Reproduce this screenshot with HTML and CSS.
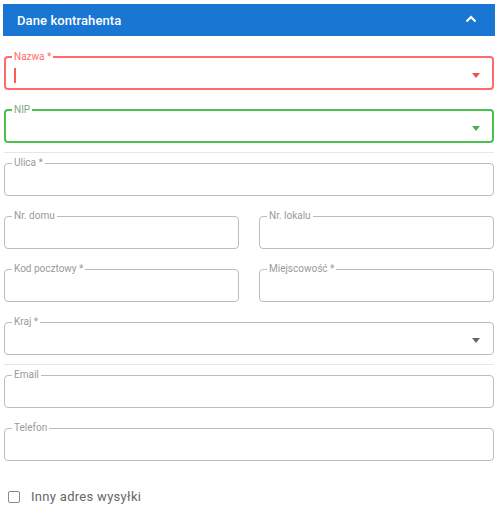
FILE: index.html
```html
<!DOCTYPE html>
<html lang="pl">
<head>
<meta charset="utf-8">
<title>Dane kontrahenta</title>
<link rel="stylesheet" href="styles.css">
</head>
<body>
<div class="panel">
  <div class="panel-header">
    <span class="panel-title">Dane kontrahenta</span>
    <svg class="chevron" width="12" height="8" viewBox="0 0 12 8"><path d="M1.5 6.5 L6 2 L10.5 6.5" fill="none" stroke="#fff" stroke-width="2.2"/></svg>
  </div>
  <div class="panel-body">
    <fieldset class="field field-error">
      <legend>Nazwa *</legend>
      <div class="field-inner">
        <span class="caret-cursor"></span>
        <span class="arrow arrow-red"></span>
      </div>
    </fieldset>
    <div class="group">
      <fieldset class="field field-success">
        <legend>NIP</legend>
        <div class="field-inner"><span class="arrow arrow-green"></span></div>
      </fieldset>
    </div>
    <fieldset class="field">
      <legend>Ulica *</legend>
      <div class="field-inner"></div>
    </fieldset>
    <div class="row">
      <fieldset class="field">
        <legend>Nr. domu</legend>
        <div class="field-inner"></div>
      </fieldset>
      <fieldset class="field">
        <legend>Nr. lokalu</legend>
        <div class="field-inner"></div>
      </fieldset>
    </div>
    <div class="row">
      <fieldset class="field">
        <legend>Kod pocztowy *</legend>
        <div class="field-inner"></div>
      </fieldset>
      <fieldset class="field">
        <legend>Miejscowość *</legend>
        <div class="field-inner"></div>
      </fieldset>
    </div>
    <div class="group">
      <fieldset class="field">
        <legend>Kraj *</legend>
        <div class="field-inner"><span class="arrow arrow-gray"></span></div>
      </fieldset>
    </div>
    <fieldset class="field">
      <legend>Email</legend>
      <div class="field-inner"></div>
    </fieldset>
    <fieldset class="field">
      <legend>Telefon</legend>
      <div class="field-inner"></div>
    </fieldset>
    <label class="check">
      <span class="check-box"></span>
      <span class="check-label">Inny adres wysyłki</span>
    </label>
  </div>
</div>
</body>
</html>
```
FILE: styles.css
```css
* { box-sizing: border-box; }
html, body { margin: 0; padding: 0; background: #fff; }
body {
  font-family: Roboto, "Liberation Sans", sans-serif;
  color: #333;
}
.panel {
  padding: 4px 5px 0 3px;
}
.panel-header {
  height: 32px;
  background: #1976d2;
  display: flex;
  align-items: center;
  justify-content: space-between;
  padding: 0 18px 0 14px;
}
.panel-title {
  color: #fff;
  font-size: 13px;
  font-weight: 500;
  letter-spacing: 0.1px;
}
.chevron { display: block; margin-top: -2px; }
.panel-body {
  padding: 16px 1px 0 1px;
  display: flex;
  flex-direction: column;
  gap: 15px;
}
.group {
  padding-bottom: 9px;
  border-bottom: 1px solid #e6e6e6;
  margin-bottom: -10px;
}
.row {
  display: flex;
  gap: 20px;
}
.row .field { flex: 1; }
.field {
  margin: 0;
  padding: 0 8px 0 8px;
  height: 38px;
  border: 1px solid #bdbdbd;
  border-radius: 4px;
  min-width: 0;
}
.field legend {
  font-size: 10px;
  line-height: 10px;
  padding: 0 2px;
  margin-left: -1px;
  color: #9a9a9a;
}
.field-inner {
  height: 26px;
  display: flex;
  align-items: center;
  justify-content: space-between;
}
.field-error {
  border: 2px solid #ff6b6b;
  padding: 0 7px;
}
.field-error legend { color: #ff6b6b; }
.field-success {
  border: 2px solid #4cbf50;
  padding: 0 7px;
}
.field-success legend { color: #7fa87f; }
.caret-cursor {
  width: 2px;
  height: 15px;
  background: #ff5a5a;
  margin-left: 1px;
}
.arrow {
  width: 0;
  height: 0;
  border-left: 4px solid transparent;
  border-right: 4px solid transparent;
  border-top: 5px solid #666;
  margin-left: auto;
  margin-right: 5px;
}
.arrow-red { border-top-color: #f44d4d; }
.arrow-green { border-top-color: #4caf50; }
.arrow-gray { border-top-color: #666; }
.check {
  display: flex;
  align-items: center;
  gap: 11px;
  margin-top: 13px;
  padding-left: 4px;
}
.check-box {
  width: 12px;
  height: 12px;
  border: 1.5px solid #8a8a8a;
  border-radius: 2px;
}
.check-label {
  font-size: 13px;
  color: #666;
  letter-spacing: 0.3px;
}
```
